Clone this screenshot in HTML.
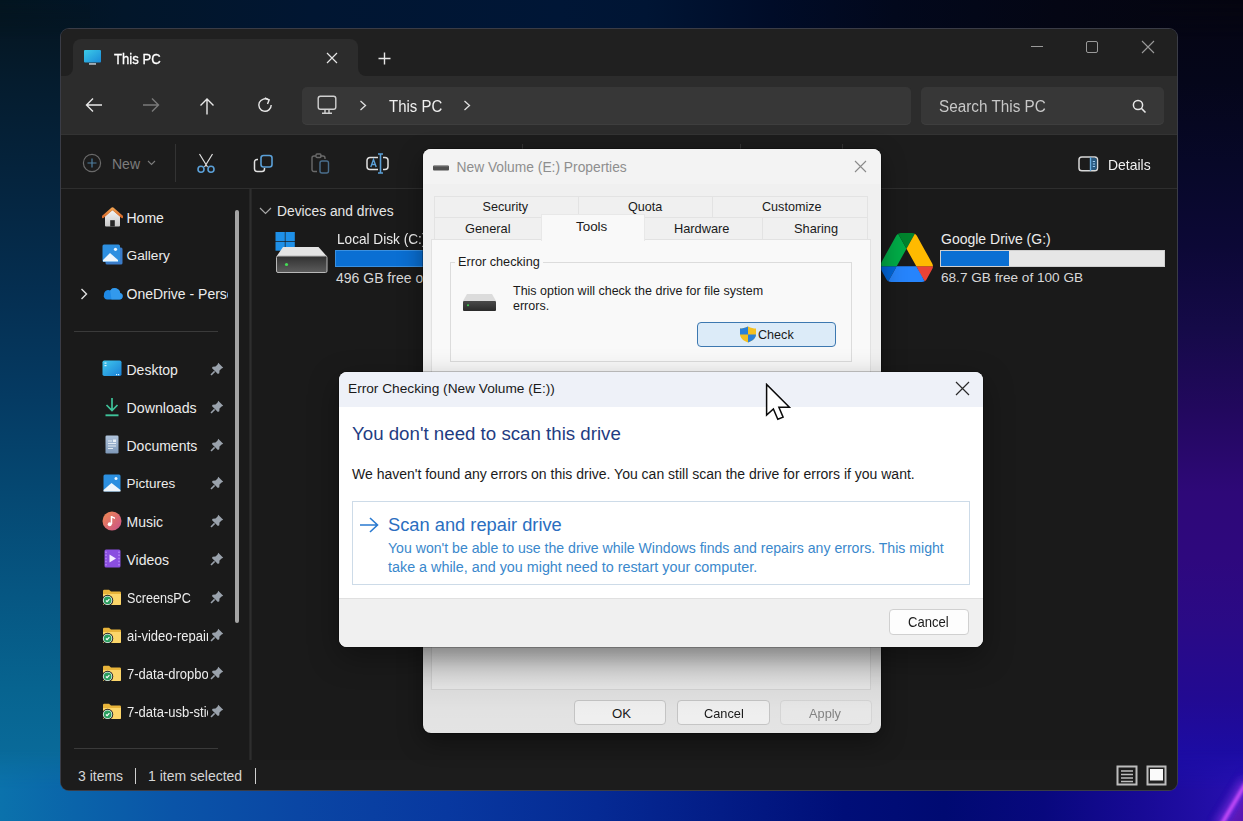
<!DOCTYPE html>
<html><head><meta charset="utf-8">
<style>
*{box-sizing:border-box;margin:0;padding:0}
html,body{width:1243px;height:821px;overflow:hidden}
body{position:relative;font-family:"Liberation Sans",sans-serif;background:#03091a}
.a{position:absolute}
.t{position:absolute;white-space:nowrap;line-height:1}
#bgT{left:0;top:0;width:1243px;height:40px;background:linear-gradient(90deg,#031a2c 0%,#031a34 30%,#041a3a 50%,#04122c 70%,#03081a 85%,#040616 100%)}
#bgL{left:0;top:0;width:70px;height:821px;background:linear-gradient(180deg,#051726 0%,#05223c 15%,#052e54 30%,#04406c 50%,#05527e 65%,#07628e 80%,#096e9c 92%,#0a74a6 100%)}
#bgR{left:1170px;top:0;width:73px;height:821px;background:linear-gradient(180deg,#05061a 0%,#060a22 15%,#0a0a36 30%,#1c0856 48%,#2c0878 62%,#330a86 75%,#2a0c9e 88%,#2610b0 100%)}
#bgB{left:0;top:780px;width:1243px;height:41px;background:linear-gradient(90deg,#0a6ea6 0%,#0a5aa8 8%,#0a46a2 22%,#0838a0 38%,#04268e 52%,#020f7c 66%,#000a74 76%,#0c0886 86%,#1e0ca0 94%,#2812b4 100%)}
#arcR{left:1130px;top:700px;width:200px;height:200px;border-radius:50%;border:3px solid rgba(220,80,240,0.85);box-shadow:0 0 12px rgba(200,60,240,0.6);clip-path:inset(0 0 0 0)}
#win{left:61px;top:29px;width:1116px;height:761px;border-radius:8px;overflow:hidden;background:#191919;border:1px solid #3a3d45}
</style></head>
<body>
<!--BG-->
<div class="a" style="left:0;top:0;width:1243px;height:821px;background:linear-gradient(90deg,#031520 0%,#02162a 10%,#011632 25%,#001636 45%,#001534 52%,#000c28 62%,#02081c 72%,#040614 85%,#050510 100%)"></div>
<div class="a" style="left:0;top:0;width:90px;height:821px;background:linear-gradient(180deg,#05141e 0%,#051c2e 10%,#05243e 22%,#052e50 35%,#053a62 48%,#054872 60%,#065682 72%,#076490 84%,#0a6c9c 94%,#0b70a6 100%);-webkit-mask-image:linear-gradient(180deg,transparent 0,#000 40px)"></div>
<div class="a" style="left:1150px;top:0;width:93px;height:821px;background:linear-gradient(180deg,#050512 0%,#05061a 10%,#070828 20%,#0c0836 30%,#150a48 40%,#22085e 50%,#2e0878 60%,#2e087e 68%,#2a0a86 76%,#220a92 85%,#1c0ca4 92%,#1a10b8 100%);-webkit-mask-image:linear-gradient(180deg,transparent 0,#000 40px)"></div>
<div class="a" style="left:0;top:750px;width:1243px;height:71px;background:linear-gradient(90deg,#0b72ac 0%,#0a64aa 6%,#0a54a8 14%,#0a46a4 24%,#0838a0 36%,#052a94 48%,#031c86 58%,#000e78 68%,#000a72 76%,#08087e 84%,#180a96 92%,#2810b0 100%);-webkit-mask-image:linear-gradient(180deg,transparent 0,#000 40px)"></div>
<!--/BG-->
<svg class="a" style="left:1153px;top:706px" width="93" height="121" viewBox="0 0 93 121"><defs><filter id="blr" filterUnits="userSpaceOnUse" x="0" y="0" width="93" height="121"><feGaussianBlur stdDeviation="1.5"/></filter><filter id="blr2" filterUnits="userSpaceOnUse" x="0" y="0" width="93" height="121"><feGaussianBlur stdDeviation="5"/></filter></defs>
<path d="M 60 121 Q 78 92 93 66 L 93 121 Z" fill="#5a20c8" opacity="0.5" filter="url(#blr2)"/>
<path d="M 66 121 Q 82 96 93 76" stroke="#9a30f0" stroke-width="10" fill="none" opacity="0.55" filter="url(#blr2)"/>
<path d="M 67 121 Q 81 97 93 77" stroke="#d050ff" stroke-width="3.5" fill="none" opacity="0.95" filter="url(#blr)"/>
<path d="M 75 121 Q 85 103 93 90 L 93 121 Z" fill="#6a18b0" opacity="0.6" filter="url(#blr)"/>
</svg>

<!-- explorer window frame -->
<div class="a" style="left:61px;top:29px;width:1116px;height:761px;border-radius:8px;background:#1a1a1a;box-shadow:0 0 0 1px #3a3c46"></div>
<!-- title bar -->
<div class="a" style="left:61px;top:29px;width:1116px;height:47px;border-radius:8px 8px 0 0;background:#202020"></div>
<!-- tab -->
<div class="a" style="left:73px;top:39px;width:285px;height:37px;border-radius:8px 8px 0 0;background:#2c2c2c"></div>
<div class="a" style="left:358px;top:68px;width:8px;height:8px;background:#2c2c2c"></div>
<div class="a" style="left:358px;top:60px;width:16px;height:16px;border-radius:0 0 0 8px;background:#202020"></div>
<div class="a" style="left:61px;top:68px;width:12px;height:8px;background:#2c2c2c"></div>
<div class="a" style="left:61px;top:60px;width:12px;height:16px;border-radius:0 0 8px 0;background:#202020"></div>
<!-- tab icon monitor -->
<svg class="a" style="left:83px;top:49px" width="19" height="17" viewBox="0 0 19 17">
 <defs><linearGradient id="mg" x1="0" y1="0" x2="1" y2="1"><stop offset="0" stop-color="#3ccbe8"/><stop offset="1" stop-color="#1a8ad8"/></linearGradient></defs>
 <rect x="1" y="1" width="17" height="12.5" rx="1" fill="url(#mg)"/>
 <rect x="6" y="14.3" width="7" height="1.3" fill="#d8e4ee"/>
</svg>
<div class="t" style="left:114px;top:51.2px;font-size:15px;color:#fff;-webkit-text-stroke:0.3px #fff;transform:scaleX(0.875);transform-origin:0 0">This PC</div>
<!-- tab close x -->
<svg class="a" style="left:326px;top:52px" width="12" height="12" viewBox="0 0 12 12"><path d="M1 1L11 11M11 1L1 11" stroke="#e6e6e6" stroke-width="1.2"/></svg>
<!-- plus -->
<svg class="a" style="left:378px;top:52px" width="13" height="13" viewBox="0 0 13 13"><path d="M6.5 0.5V12.5M0.5 6.5H12.5" stroke="#e6e6e6" stroke-width="1.4"/></svg>
<!-- window controls -->
<div class="a" style="left:1031px;top:45.5px;width:12px;height:1px;background:#9a9a9a"></div>
<div class="a" style="left:1086px;top:41px;width:11.5px;height:11.5px;border:1px solid #9a9a9a;border-radius:2px"></div>
<svg class="a" style="left:1141px;top:40px" width="14" height="14" viewBox="0 0 14 14"><path d="M1 1L13 13M13 1L1 13" stroke="#9a9a9a" stroke-width="1.1"/></svg>

<!-- address row -->
<div class="a" style="left:61px;top:76px;width:1116px;height:58px;background:#2c2c2c"></div>
<!-- nav arrows -->
<svg class="a" style="left:85px;top:97px" width="18" height="16" viewBox="0 0 18 16"><path d="M1.5 8H17M8 1.5L1.5 8L8 14.5" stroke="#e8e8e8" stroke-width="1.4" fill="none"/></svg>
<svg class="a" style="left:142px;top:97px" width="18" height="16" viewBox="0 0 18 16"><path d="M16.5 8H1M10 1.5L16.5 8L10 14.5" stroke="#7a7a7a" stroke-width="1.4" fill="none"/></svg>
<svg class="a" style="left:199px;top:97px" width="16" height="18" viewBox="0 0 16 18"><path d="M8 2V17.5M1.5 8.5L8 2L14.5 8.5" stroke="#e8e8e8" stroke-width="1.4" fill="none"/></svg>
<svg class="a" style="left:256px;top:96px" width="18" height="18" viewBox="0 0 18 18"><path d="M15.2 9A6.2 6.2 0 1 1 12.6 4" stroke="#e8e8e8" stroke-width="1.4" fill="none"/><path d="M8.8 1.8L13.2 3.8L11.5 8" stroke="#e8e8e8" stroke-width="1.4" fill="none"/></svg>
<!-- address box -->
<div class="a" style="left:302px;top:86.5px;width:609px;height:38px;border-radius:5px;background:#373737;box-shadow:inset 0 -1px 0 #3e3e3e"></div>
<svg class="a" style="left:317px;top:95px" width="20" height="20" viewBox="0 0 20 20"><rect x="1.2" y="1.2" width="17.6" height="13" rx="2.2" stroke="#d0d0d0" stroke-width="1.4" fill="none"/><path d="M8 14.5V17.5M12 14.5V17.5M5 18.2H15" stroke="#d0d0d0" stroke-width="1.4"/></svg>
<svg class="a" style="left:359px;top:100px" width="8" height="11" viewBox="0 0 8 11"><path d="M1.5 1L6.5 5.5L1.5 10" stroke="#e0e0e0" stroke-width="1.3" fill="none"/></svg>
<div class="t" style="left:389px;top:97.6px;font-size:17.4px;color:#f0f0f0;transform:scaleX(0.86);transform-origin:0 0">This PC</div>
<svg class="a" style="left:463px;top:100px" width="8" height="11" viewBox="0 0 8 11"><path d="M1.5 1L6.5 5.5L1.5 10" stroke="#e0e0e0" stroke-width="1.3" fill="none"/></svg>
<!-- search box -->
<div class="a" style="left:921px;top:86.5px;width:243px;height:38px;border-radius:5px;background:#373737;box-shadow:inset 0 -1px 0 #3e3e3e"></div>
<div class="t" style="left:938.5px;top:97.6px;font-size:17.3px;color:#c8c8c8;transform:scaleX(0.885);transform-origin:0 0">Search This PC</div>
<svg class="a" style="left:1132px;top:99px" width="15" height="15" viewBox="0 0 15 15"><circle cx="6" cy="6" r="4.6" stroke="#e8e8e8" stroke-width="1.5" fill="none"/><path d="M9.3 9.3L13.5 13.5" stroke="#e8e8e8" stroke-width="1.6"/></svg>

<!-- command bar -->
<div class="a" style="left:61px;top:134px;width:1116px;height:54px;background:#1c1c1c;border-top:1px solid #333"></div>
<div class="a" style="left:61px;top:188px;width:1116px;height:1px;background:#2e2e2e"></div>
<svg class="a" style="left:82px;top:153px" width="20" height="20" viewBox="0 0 20 20"><circle cx="10" cy="10" r="8.6" stroke="#6a6a6a" stroke-width="1.2" fill="none"/><path d="M10 5.5V14.5M5.5 10H14.5" stroke="#4f7fa0" stroke-width="1.2"/></svg>
<div class="t" style="left:112px;top:157px;font-size:14px;color:#7c7c7c">New</div>
<svg class="a" style="left:147px;top:160px" width="9" height="6" viewBox="0 0 9 6"><path d="M1 1L4.5 4.5L8 1" stroke="#7c7c7c" stroke-width="1.1" fill="none"/></svg>
<div class="a" style="left:175px;top:144px;width:1px;height:38px;background:#333"></div>
<!-- scissors -->
<svg class="a" style="left:196px;top:153px" width="20" height="21" viewBox="0 0 20 21"><path d="M3.5 1L11.5 14M16.5 1L8.5 14" stroke="#e0e0e0" stroke-width="1.2" fill="none"/><circle cx="5" cy="16.3" r="3" stroke="#5ba0d8" stroke-width="1.6" fill="none"/><circle cx="15" cy="16.3" r="3" stroke="#5ba0d8" stroke-width="1.6" fill="none"/></svg>
<!-- copy -->
<svg class="a" style="left:253px;top:154px" width="21" height="19" viewBox="0 0 21 19"><path d="M5 5.5H4A2.5 2.5 0 0 0 1.5 8V15A2.5 2.5 0 0 0 4 17.5H9A2.5 2.5 0 0 0 11.5 15V14" stroke="#e0e0e0" stroke-width="1.5" fill="none"/><rect x="8" y="1.5" width="11" height="11.5" rx="2.5" stroke="#5ba0d8" stroke-width="1.6" fill="none"/></svg>
<!-- paste -->
<svg class="a" style="left:311px;top:153px" width="19" height="21" viewBox="0 0 19 21"><path d="M9 3H12A2 2 0 0 1 14 5V6M6 18.5H3A2 2 0 0 1 1 16.5V5A2 2 0 0 1 3 3H5" stroke="#6a6a6a" stroke-width="1.4" fill="none"/><rect x="5" y="1" width="5" height="3.5" rx="1" stroke="#6a6a6a" stroke-width="1.3" fill="none"/><rect x="9" y="8" width="8.5" height="12" rx="2" stroke="#4a6e8c" stroke-width="1.4" fill="none"/></svg>
<!-- rename -->
<svg class="a" style="left:366px;top:153px" width="23" height="21" viewBox="0 0 23 21"><path d="M12 4.5H4A3 3 0 0 0 1 7.5V13.5A3 3 0 0 0 4 16.5H12M17 4.5H19A3 3 0 0 1 22 7.5V13.5A3 3 0 0 1 19 16.5H17" stroke="#e0e0e0" stroke-width="1.5" fill="none"/><path d="M14.5 1V20M12 1H17M12 20H17" stroke="#5ba0d8" stroke-width="1.6"/><path d="M4.8 14L7.5 6.5L10.2 14M5.8 11.5H9.2" stroke="#5ba0d8" stroke-width="1.4" fill="none"/></svg>
<div class="a" style="left:522px;top:144px;width:1px;height:38px;background:#333"></div>
<div class="a" style="left:740px;top:144px;width:1px;height:38px;background:#333"></div>
<div class="a" style="left:842px;top:144px;width:1px;height:38px;background:#333"></div>
<!-- details -->
<svg class="a" style="left:1078px;top:156px" width="21" height="16" viewBox="0 0 21 16"><rect x="1" y="1" width="18.5" height="13.8" rx="2.8" stroke="#d8d8d8" stroke-width="1.5" fill="none"/><path d="M12.5 1.8H16.5A2.2 2.2 0 0 1 18.7 4V12A2.2 2.2 0 0 1 16.5 14H12.5Z" fill="#2a5a80"/><path d="M12.5 1V15" stroke="#6aaee0" stroke-width="1.4"/><path d="M14.8 5.5H17M14.8 8H17M14.8 10.5H17" stroke="#9ccaf0" stroke-width="1.1"/></svg>
<div class="t" style="left:1107.5px;top:158px;font-size:14.6px;color:#f0f0f0;transform:scaleX(0.955);transform-origin:0 0">Details</div>

<!-- nav pane -->
<div class="a" style="left:248.5px;top:189px;width:3px;height:571px;background:linear-gradient(90deg,#222 0%,#2e2e2e 50%,#222 100%)"></div>
<div class="a" style="left:235.2px;top:210px;width:3.8px;height:413px;border-radius:2px;background:#a4a4a4"></div>
<!-- status bar -->
<div class="a" style="left:61px;top:760px;width:1116px;height:30px;border-radius:0 0 8px 8px;background:#1c1c1c"></div>
<div class="t" style="left:78px;top:769px;font-size:14px;color:#d6d6d6">3 items</div>
<div class="a" style="left:135px;top:768px;width:1px;height:16px;background:#d0d0d0"></div>
<div class="t" style="left:148px;top:769px;font-size:14px;color:#d6d6d6">1 item selected</div>
<div class="a" style="left:255px;top:768px;width:1px;height:16px;background:#d0d0d0"></div>
<svg class="a" style="left:1116px;top:765px" width="22" height="21" viewBox="0 0 22 21"><rect x="1.5" y="1.5" width="19" height="18" stroke="#bdbdbd" stroke-width="2" fill="none"/><path d="M5 6H17M5 9.5H17M5 13H17M5 16.5H17" stroke="#bdbdbd" stroke-width="1.6"/></svg>
<svg class="a" style="left:1146px;top:765px" width="21" height="21" viewBox="0 0 21 21"><rect x="1.5" y="1.5" width="18" height="18" stroke="#bdbdbd" stroke-width="2" fill="#202020"/><rect x="4" y="4" width="13" height="11.5" fill="#fafafa"/></svg>


<!-- NAV ITEMS -->
<!-- home -->
<svg class="a" style="left:102px;top:207px" width="21" height="20" viewBox="0 0 21 20"><defs><linearGradient id="hr" x1="0" y1="0" x2="0" y2="1"><stop offset="0" stop-color="#f0a050"/><stop offset="1" stop-color="#d86a2a"/></linearGradient><linearGradient id="hw" x1="0" y1="0" x2="0" y2="1"><stop offset="0" stop-color="#f4f4f4"/><stop offset="1" stop-color="#c8c8c8"/></linearGradient></defs><path d="M3 9L10.5 3L18 9V18.5A1 1 0 0 1 17 19.5H4A1 1 0 0 1 3 18.5Z" fill="url(#hw)"/><path d="M8.2 19.5V13.2H12.8V19.5Z" fill="#262626"/><path d="M1 9.8L10.5 1.5L20 9.8" stroke="url(#hr)" stroke-width="2.6" fill="none" stroke-linejoin="round" stroke-linecap="round"/></svg>
<div class="t" style="left:126.5px;top:211px;font-size:14px;color:#ececec">Home</div>
<!-- gallery -->
<svg class="a" style="left:102px;top:244px" width="21" height="21" viewBox="0 0 21 21"><rect x="3.5" y="3.5" width="17" height="17" rx="1.5" fill="#3a7bc8"/><rect x="0.5" y="0.5" width="17.5" height="17.5" rx="1.5" fill="#2d8fe0"/><path d="M1 16L8 9L16 16V17.5H1Z" fill="#eef6fc"/><circle cx="13.5" cy="5.3" r="1.6" fill="#eef6fc"/></svg>
<div class="t" style="left:126.5px;top:249px;font-size:13.7px;color:#ececec">Gallery</div>
<!-- onedrive -->
<svg class="a" style="left:80px;top:288px" width="8" height="12" viewBox="0 0 8 12"><path d="M1.5 1L6.5 6L1.5 11" stroke="#e0e0e0" stroke-width="1.4" fill="none"/></svg>
<svg class="a" style="left:102px;top:285px" width="21" height="15" viewBox="0 0 21 15"><path d="M6 14.5H17.5A3.3 3.3 0 0 0 18.2 8A5.5 5.5 0 0 0 8.2 5.5A4.3 4.3 0 0 0 2 9.6A3.6 3.6 0 0 0 6 14.5Z" fill="#1f8ae6"/><path d="M9.5 14.5H17.5A3.3 3.3 0 0 0 18.2 8A5.5 5.5 0 0 0 8.2 5.5Z" fill="#3aa0f0" opacity="0.7"/></svg>
<div class="t" style="left:126.5px;top:287px;font-size:14px;color:#ececec;width:101px;overflow:hidden">OneDrive - Personal</div>
<div class="a" style="left:74px;top:331px;width:144px;height:1px;background:#3a3a3a"></div>

<!-- desktop -->
<svg class="a" style="left:102px;top:360px" width="20" height="17" viewBox="0 0 20 17"><defs><linearGradient id="dg" x1="0" y1="0" x2="1" y2="1"><stop offset="0" stop-color="#40c8ee"/><stop offset="1" stop-color="#1a7fd6"/></linearGradient></defs><rect x="0.5" y="0.5" width="19" height="15.5" rx="1.8" fill="url(#dg)"/><rect x="2.5" y="2.5" width="2" height="1.2" fill="#d8f4ff"/><rect x="2.5" y="5" width="2" height="1.2" fill="#d8f4ff"/><rect x="14" y="14" width="1.2" height="1.2" fill="#d8f4ff"/><rect x="16" y="14" width="1.2" height="1.2" fill="#d8f4ff"/></svg>
<div class="t" style="left:126.5px;top:363px;font-size:14px;color:#ececec">Desktop</div>
<!-- downloads -->
<svg class="a" style="left:104px;top:397px" width="16" height="20" viewBox="0 0 16 20"><path d="M8 1V13.5M2.5 8L8 13.5L13.5 8" stroke="#3fc39a" stroke-width="1.7" fill="none"/><path d="M1.5 18.3H14.5" stroke="#3fc39a" stroke-width="1.9"/></svg>
<div class="t" style="left:126.5px;top:401px;font-size:14.2px;color:#ececec">Downloads</div>
<!-- documents -->
<svg class="a" style="left:105px;top:435px" width="14" height="19" viewBox="0 0 14 19"><defs><linearGradient id="docg" x1="0" y1="0" x2="0" y2="1"><stop offset="0" stop-color="#b0c4dc"/><stop offset="1" stop-color="#7e98b8"/></linearGradient></defs><rect x="0.5" y="0.5" width="13" height="18" rx="1.3" fill="url(#docg)"/><path d="M3 6H7M3 8.5H11M3 11H11M3 13.5H8" stroke="#eaf0f6" stroke-width="0.9"/><rect x="8" y="4.5" width="3" height="2.5" fill="#eaf0f6"/></svg>
<div class="t" style="left:126.5px;top:439px;font-size:14px;color:#ececec">Documents</div>
<!-- pictures -->
<svg class="a" style="left:103px;top:474px" width="18" height="18" viewBox="0 0 18 18"><rect x="0.5" y="0.5" width="17" height="17" rx="1.5" fill="#2b8fe0"/><path d="M0.5 16L8.5 9L17.5 16V17.5H0.5Z" fill="#eef6fc"/><circle cx="13" cy="4.5" r="1.5" fill="#eef6fc"/></svg>
<div class="t" style="left:126.5px;top:477px;font-size:13.5px;color:#ececec">Pictures</div>
<!-- music -->
<svg class="a" style="left:102px;top:511px" width="20" height="20" viewBox="0 0 20 20"><defs><linearGradient id="musg" x1="0" y1="0" x2="1" y2="1"><stop offset="0" stop-color="#f08a50"/><stop offset="1" stop-color="#c8508a"/></linearGradient></defs><circle cx="10" cy="10" r="9.5" fill="url(#musg)"/><path d="M9.5 5V13" stroke="#fff" stroke-width="1.5"/><path d="M9.5 5L13 6.5V8L9.5 6.5Z" fill="#fff"/><circle cx="7.7" cy="13.2" r="2" fill="#fff"/></svg>
<div class="t" style="left:126.5px;top:515px;font-size:14px;color:#ececec">Music</div>
<!-- videos -->
<svg class="a" style="left:104px;top:549px" width="17" height="19" viewBox="0 0 17 19"><rect x="0.5" y="0.5" width="16" height="18" rx="1.5" fill="#8a4ee0"/><path d="M2 2.5V16.5M15 2.5V16.5" stroke="#b98af8" stroke-width="1.4" stroke-dasharray="1.5 1.6"/><path d="M5.5 5.5V13.5L12 9.5Z" fill="#f4eaff"/></svg>
<div class="t" style="left:126.5px;top:553px;font-size:14px;color:#ececec">Videos</div>

<!-- folders -->
<svg class="a" style="display:none"><defs>
<symbol id="fold" viewBox="0 0 20 17"><path d="M1 2A1.3 1.3 0 0 1 2.3 0.7H7L9 2.5H17.7A1.3 1.3 0 0 1 19 3.8V14.7A1.3 1.3 0 0 1 17.7 16H2.3A1.3 1.3 0 0 1 1 14.7Z" fill="#e8b43a"/><path d="M1 5H19V14.7A1.3 1.3 0 0 1 17.7 16H2.3A1.3 1.3 0 0 1 1 14.7Z" fill="#fcd66a"/><circle cx="5.6" cy="11.4" r="5.6" fill="#1b1b1b"/><circle cx="5.6" cy="11.4" r="4.7" fill="#e8f4ec"/><circle cx="5.6" cy="11.4" r="3.8" fill="#2a9d5e"/><path d="M3.9 11.5L5.1 12.7L7.4 10.2" stroke="#fff" stroke-width="1.1" fill="none"/></symbol>
<symbol id="pin" viewBox="0 0 14 14"><path d="M8.2 0.8L13.2 5.8L11.6 6.4L9.5 8.5L9.3 11.3L7.9 12.1L1.9 6.1L2.7 4.7L5.5 4.5L7.6 2.4Z" fill="#9aa2ac"/><path d="M4.6 9.4L1 13" stroke="#9aa2ac" stroke-width="1.5"/></symbol>
</defs></svg>
<svg class="a" style="left:102px;top:589px" width="20" height="17"><use href="#fold"/></svg>
<div class="t" style="left:126.5px;top:591px;font-size:14px;color:#ececec;transform:scaleX(0.9);transform-origin:0 0">ScreensPC</div>
<svg class="a" style="left:102px;top:627px" width="20" height="17"><use href="#fold"/></svg>
<div class="t" style="left:126.5px;top:629px;font-size:14px;color:#ececec;width:87px;overflow:hidden;transform:scaleX(0.93);transform-origin:0 0">ai-video-repair</div>
<svg class="a" style="left:102px;top:665px" width="20" height="17"><use href="#fold"/></svg>
<div class="t" style="left:126.5px;top:667px;font-size:14px;color:#ececec;width:87px;overflow:hidden;transform:scaleX(0.93);transform-origin:0 0">7-data-dropbox</div>
<svg class="a" style="left:102px;top:703px" width="20" height="17"><use href="#fold"/></svg>
<div class="t" style="left:126.5px;top:705px;font-size:14px;color:#ececec;width:87px;overflow:hidden;transform:scaleX(0.93);transform-origin:0 0">7-data-usb-stick</div>
<div class="a" style="left:74px;top:748px;width:144px;height:1px;background:#3a3a3a"></div>
<!-- pins -->
<svg class="a" style="left:210px;top:362px" width="14" height="14"><use href="#pin"/></svg>
<svg class="a" style="left:210px;top:400px" width="14" height="14"><use href="#pin"/></svg>
<svg class="a" style="left:210px;top:438px" width="14" height="14"><use href="#pin"/></svg>
<svg class="a" style="left:210px;top:476px" width="14" height="14"><use href="#pin"/></svg>
<svg class="a" style="left:210px;top:514px" width="14" height="14"><use href="#pin"/></svg>
<svg class="a" style="left:210px;top:552px" width="14" height="14"><use href="#pin"/></svg>
<svg class="a" style="left:210px;top:590px" width="14" height="14"><use href="#pin"/></svg>
<svg class="a" style="left:210px;top:628px" width="14" height="14"><use href="#pin"/></svg>
<svg class="a" style="left:210px;top:666px" width="14" height="14"><use href="#pin"/></svg>
<svg class="a" style="left:210px;top:704px" width="14" height="14"><use href="#pin"/></svg>

<!-- CONTENT -->
<svg class="a" style="left:259px;top:207px" width="13" height="8" viewBox="0 0 13 8"><path d="M1 1L6.5 6.5L12 1" stroke="#a8a8a8" stroke-width="1.2" fill="none"/></svg>
<div class="t" style="left:277px;top:205px;font-size:13.8px;color:#e6e6e6">Devices and drives</div>
<!-- local disk icon -->
<svg class="a" style="left:274px;top:231px" width="56" height="43" viewBox="0 0 56 43"><defs><linearGradient id="dbody" x1="0" y1="0" x2="0" y2="1"><stop offset="0" stop-color="#303030"/><stop offset="1" stop-color="#5c5c5c"/></linearGradient></defs>
<rect x="1.5" y="1" width="9.3" height="9" fill="#1e90e8"/><rect x="11.5" y="1" width="9.3" height="9" fill="#1e90e8"/><rect x="1.5" y="10.7" width="9.3" height="9" fill="#1e90e8"/><rect x="11.5" y="10.7" width="9.3" height="9" fill="#1e90e8"/>
<path d="M9 16H44.5L53 25.5H2.5Z" fill="#e4e4e4"/>
<rect x="2.5" y="25" width="50.5" height="16.5" rx="1.5" fill="url(#dbody)" stroke="#b8b8b8" stroke-width="1"/>
<circle cx="12.5" cy="33.5" r="1.6" fill="#44dd55"/></svg>
<div class="t" style="left:336.5px;top:232px;font-size:14.5px;color:#ececec;transform:scaleX(0.94);transform-origin:0 0">Local Disk (C:)</div>
<div class="a" style="left:335px;top:250px;width:300px;height:17px;background:#0a6fd3;border:1px solid #3a90e0"></div>
<div class="t" style="left:336px;top:271px;font-size:14px;color:#d8d8d8">496 GB free of 1TB</div>

<!-- google drive -->
<svg class="a" style="left:880px;top:233px" width="53" height="49" viewBox="0 0 87.3 78" preserveAspectRatio="none">
<path d="m6.6 66.85 3.85 6.65c.8 1.4 1.95 2.5 3.3 3.3l13.75-23.8h-27.5c0 1.55.4 3.1 1.2 4.5z" fill="#0066da"/>
<path d="m43.65 25-13.75-23.8c-1.35.8-2.5 1.9-3.3 3.3l-25.4 44a9.06 9.06 0 0 0 -1.2 4.5h27.5z" fill="#00ac47"/>
<path d="m73.55 76.8c1.35-.8 2.5-1.9 3.3-3.3l1.6-2.75 7.65-13.25c.8-1.4 1.2-2.95 1.2-4.5h-27.502l5.852 11.5z" fill="#ea4335"/>
<path d="m43.65 25 13.75-23.8c-1.35-.8-2.9-1.2-4.5-1.2h-18.5c-1.6 0-3.15.45-4.5 1.2z" fill="#00832d"/>
<path d="m59.8 53h-32.3l-13.75 23.8c1.350.8 2.9 1.2 4.5 1.2h50.8c1.6 0 3.15-.45 4.5-1.2z" fill="#2684fc"/>
<path d="m73.4 26.5-12.7-22c-.8-1.4-1.95-2.5-3.3-3.3l-13.75 23.8 16.15 28h27.45c0-1.55-.4-3.1-1.2-4.5z" fill="#ffba00"/>
</svg>
<div class="t" style="left:941px;top:232px;font-size:14px;color:#ececec">Google Drive (G:)</div>
<div class="a" style="left:940px;top:250px;width:225px;height:17px;background:#e6e6e6;border:1px solid #cfcfcf"></div>
<div class="a" style="left:941px;top:251px;width:68px;height:15px;background:#0a6fd3"></div>
<div class="t" style="left:941px;top:271px;font-size:13.6px;color:#d8d8d8">68.7 GB free of 100 GB</div>

<!-- PROPERTIES DIALOG -->
<div class="a" style="left:423px;top:149px;width:458px;height:584px;border-radius:8px;background:#f0f0f0;box-shadow:0 0 0 1px rgba(0,0,0,0.25), 0 8px 24px rgba(0,0,0,0.4);overflow:hidden">
  <div class="a" style="left:0;top:0;width:458px;height:35px;background:#f3f3f3"></div>
</div>
<svg class="a" style="left:432px;top:164px" width="18" height="8" viewBox="0 0 18 8"><rect x="1" y="1.5" width="16" height="5" rx="1" fill="#505050"/><rect x="2" y="1" width="14" height="1.3" fill="#9a9a9a"/></svg>
<div class="t" style="left:456.5px;top:160.5px;font-size:13.8px;color:#8e8e8e">New Volume (E:) Properties</div>
<svg class="a" style="left:854px;top:160px" width="13" height="13" viewBox="0 0 13 13"><path d="M1 1L12 12M12 1L1 12" stroke="#8a8a8a" stroke-width="1.1"/></svg>
<!-- tabs -->
<div class="a" style="left:434px;top:195.5px;width:145px;height:22px;background:#f0f0f0;border:1px solid #e3e3e3;border-bottom:none"></div>
<div class="a" style="left:578px;top:195.5px;width:135px;height:22px;background:#f0f0f0;border:1px solid #e3e3e3;border-bottom:none"></div>
<div class="a" style="left:712px;top:195.5px;width:156px;height:22px;background:#f0f0f0;border:1px solid #e3e3e3;border-bottom:none"></div>
<div class="t" style="left:482.5px;top:201px;font-size:12.6px;color:#1a1a1a">Security</div>
<div class="t" style="left:628px;top:201px;font-size:12.6px;color:#1a1a1a">Quota</div>
<div class="t" style="left:762px;top:201px;font-size:12.6px;color:#1a1a1a">Customize</div>
<div class="a" style="left:434px;top:217px;width:108px;height:22px;background:#f0f0f0;border:1px solid #e3e3e3;border-bottom:none"></div>
<div class="a" style="left:644px;top:217px;width:119px;height:22px;background:#f0f0f0;border:1px solid #e3e3e3;border-bottom:none"></div>
<div class="a" style="left:762px;top:217px;width:106px;height:22px;background:#f0f0f0;border:1px solid #e3e3e3;border-bottom:none"></div>
<div class="t" style="left:465px;top:223px;font-size:12.8px;color:#1a1a1a">General</div>
<div class="t" style="left:674px;top:223px;font-size:12.8px;color:#1a1a1a">Hardware</div>
<div class="t" style="left:794px;top:223px;font-size:12.8px;color:#1a1a1a">Sharing</div>
<!-- panel -->
<div class="a" style="left:431px;top:239px;width:440px;height:451px;background:#f9f9f9;border:1px solid #e2e2e2"></div>
<div class="a" style="left:541px;top:214px;width:104px;height:27px;background:#f9f9f9;border:1px solid #e8e8e8;border-bottom:none"></div>
<div class="t" style="left:576px;top:219.5px;font-size:13.4px;color:#1a1a1a">Tools</div>
<!-- group box -->
<div class="a" style="left:450px;top:262px;width:402px;height:100px;border:1px solid #dcdcdc"></div>
<div class="a" style="left:455px;top:255px;width:88px;height:14px;background:#f9f9f9"></div>
<div class="t" style="left:458px;top:255.5px;font-size:12.7px;color:#1a1a1a">Error checking</div>
<svg class="a" style="left:462px;top:293px" width="35" height="19" viewBox="0 0 35 19"><defs><linearGradient id="sdb" x1="0" y1="0" x2="0" y2="1"><stop offset="0" stop-color="#4a4a4a"/><stop offset="1" stop-color="#2a2a2a"/></linearGradient></defs><path d="M5 1H30L34 8H1Z" fill="#dcdcdc"/><rect x="1" y="8" width="33" height="10" rx="1" fill="url(#sdb)"/><circle cx="6" cy="12.3" r="1" fill="#3ad050"/></svg>
<div class="t" style="left:513px;top:284.5px;font-size:12.5px;color:#1a1a1a">This option will check the drive for file system</div>
<div class="t" style="left:513px;top:299.5px;font-size:12.5px;color:#1a1a1a">errors.</div>
<div class="a" style="left:697px;top:322px;width:139px;height:25px;border-radius:4px;background:#dcebf8;border:1px solid #3d78b0"></div>
<svg class="a" style="left:739px;top:326px" width="18" height="17" viewBox="0 0 18 17"><path d="M9 0.5C6 2 3.5 2.5 1 2.5V8C1 12 4.5 15 9 16.5C13.5 15 17 12 17 8V2.5C14.5 2.5 12 2 9 0.5Z" fill="#f4c020"/><path d="M9 0.5C6 2 3.5 2.5 1 2.5V8.5H9Z" fill="#2a80d8"/><path d="M9 8.5H17C17 12 13.5 15 9 16.5Z" fill="#2a80d8"/></svg>
<div class="t" style="left:758px;top:329px;font-size:12.6px;color:#1a1a1a">Check</div>
<!-- shadow of error dialog on properties -->

<!-- buttons -->
<div class="a" style="left:574px;top:700px;width:92px;height:25px;border-radius:4px;background:#fdfdfd;border:1px solid #d0d0d0"></div>
<div class="t" style="left:612px;top:706.5px;font-size:13.2px;color:#1a1a1a">OK</div>
<div class="a" style="left:677px;top:700px;width:93px;height:25px;border-radius:4px;background:#fdfdfd;border:1px solid #d0d0d0"></div>
<div class="t" style="left:703.5px;top:706.5px;font-size:13.2px;color:#1a1a1a;transform:scaleX(0.97);transform-origin:0 0">Cancel</div>
<div class="a" style="left:780px;top:700px;width:92px;height:25px;border-radius:4px;background:#f5f5f5;border:1px solid #e2e2e2"></div>
<div class="t" style="left:808.5px;top:706.5px;font-size:13.2px;color:#8a8a8a;transform:scaleX(0.97);transform-origin:0 0">Apply</div>
<div class="a" style="left:423px;top:646px;width:458px;height:87px;border-radius:0 0 8px 8px;background:linear-gradient(180deg,rgba(0,0,0,0.24) 0%,rgba(0,0,0,0.15) 25%,rgba(0,0,0,0.09) 50%,rgba(0,0,0,0.06) 75%,rgba(0,0,0,0.05) 100%)"></div>

<!-- ERROR CHECKING DIALOG -->
<div class="a" style="left:339px;top:371.5px;width:644px;height:275px;border-radius:8px;background:#ffffff;box-shadow:0 0 0 1px rgba(0,0,0,0.2), 0 10px 30px rgba(0,0,0,0.35);overflow:hidden">
  <div class="a" style="left:0;top:0;width:644px;height:35px;background:#eef1f8"></div>
  <div class="a" style="left:0;top:226px;width:644px;height:49px;background:#f0f0f0;border-top:1px solid #e0e0e0"></div>
</div>
<div class="t" style="left:348px;top:382px;font-size:13.7px;color:#1a1a1a">Error Checking (New Volume (E:))</div>
<svg class="a" style="left:955px;top:381px" width="15" height="15" viewBox="0 0 15 15"><path d="M1 1L14 14M14 1L1 14" stroke="#2a2a2a" stroke-width="1.2"/></svg>
<div class="t" style="left:352px;top:425.2px;font-size:18.7px;color:#1f3c82">You don't need to scan this drive</div>
<div class="t" style="left:352px;top:466.5px;font-size:14px;color:#1a1a1a">We haven't found any errors on this drive. You can still scan the drive for errors if you want.</div>
<div class="a" style="left:352px;top:501px;width:618px;height:84px;border:1px solid #cddbe8"></div>
<svg class="a" style="left:359px;top:517px" width="20" height="16" viewBox="0 0 20 16"><path d="M1 8H18.5M11 1L18.5 8L11 15" stroke="#2a7ad0" stroke-width="1.6" fill="none"/></svg>
<div class="t" style="left:388px;top:516px;font-size:18.3px;color:#2a6ec0">Scan and repair drive</div>
<div class="t" style="left:388px;top:541px;font-size:14.1px;color:#3a88cc">You won't be able to use the drive while Windows finds and repairs any errors. This might</div>
<div class="t" style="left:388px;top:560px;font-size:14.35px;color:#3a88cc">take a while, and you might need to restart your computer.</div>
<div class="a" style="left:889px;top:609px;width:80px;height:26px;border-radius:4px;background:#fdfdfd;border:1px solid #d0d0d0"></div>
<div class="t" style="left:907.5px;top:614.8px;font-size:14.5px;color:#1a1a1a;transform:scaleX(0.9);transform-origin:0 0">Cancel</div>

<!-- cursor -->
<svg class="a" style="left:765px;top:383px" width="28" height="40" viewBox="0 0 28 40"><path d="M1.6 1.4V32L8.4 25.9L12.8 36.2L18.1 34.1L13.9 24.2H24.4Z" fill="#fff" stroke="#0a0a0a" stroke-width="1.5" stroke-linejoin="miter"/></svg>

</body></html>
